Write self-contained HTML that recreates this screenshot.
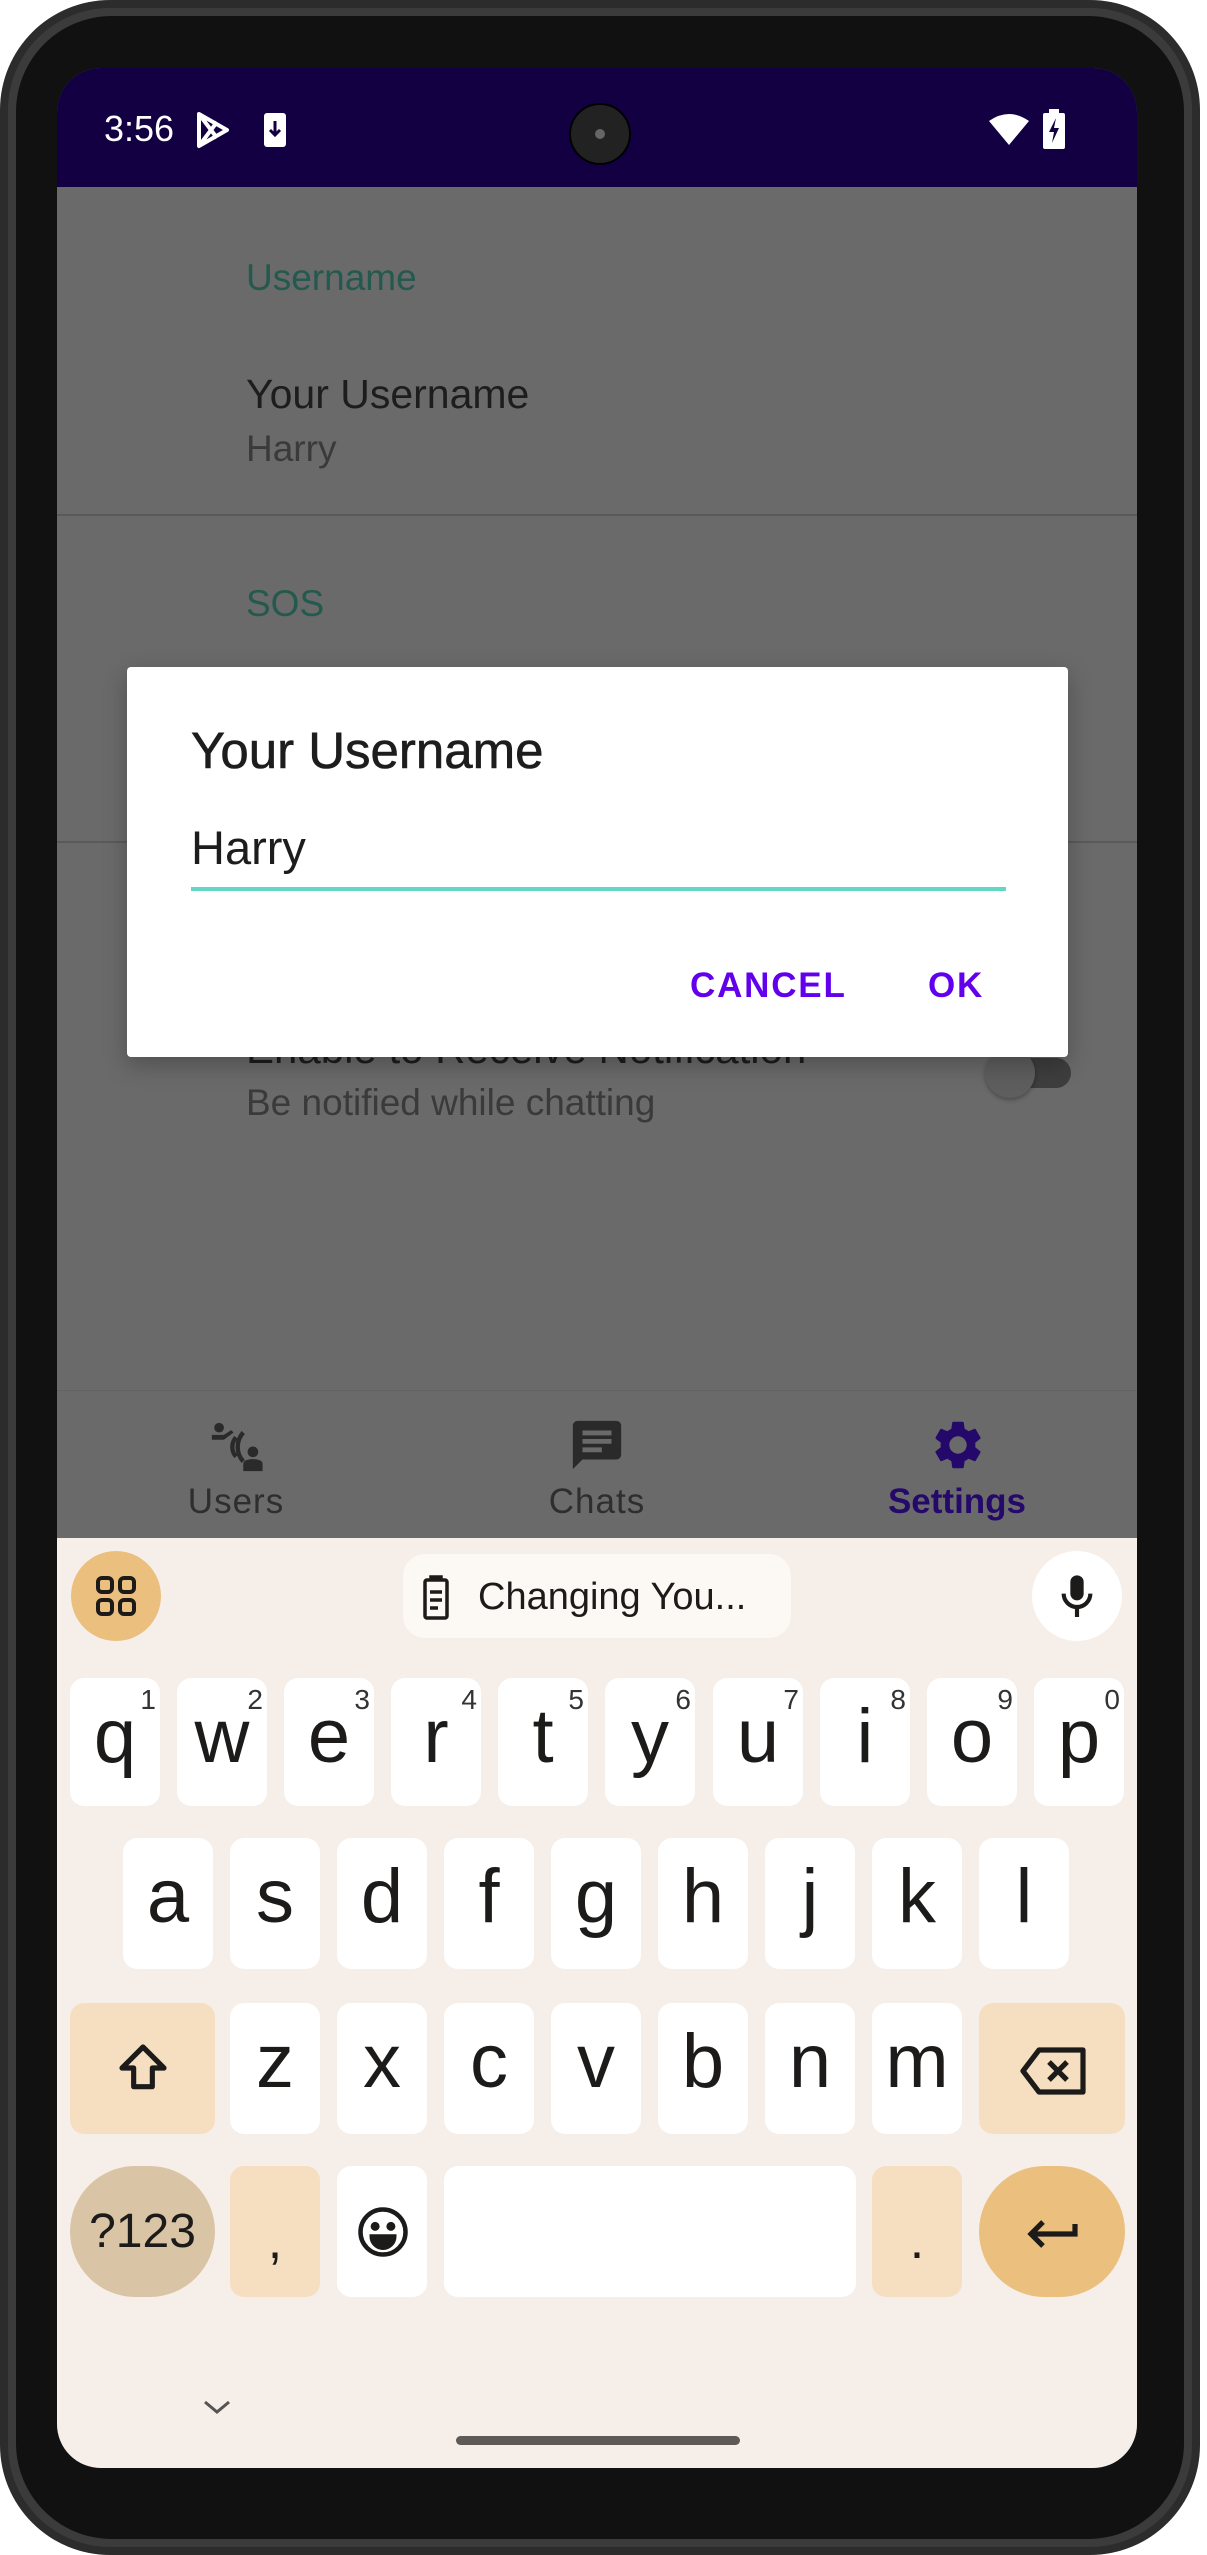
<!DOCTYPE html>
<html><head><meta charset="utf-8"><style>
*{margin:0;padding:0;box-sizing:border-box}
body{width:1207px;height:2555px;background:#fff;position:relative;overflow:hidden;font-family:"Liberation Sans",sans-serif}
.a{position:absolute}
.t{position:absolute;line-height:1;white-space:nowrap}
.k{position:absolute;background:#fff;border-radius:14px;width:90px;height:128px;text-align:center;font-size:76px;line-height:118px;color:#1c1b1a}
.k sup{position:absolute;right:4px;top:8px;font-size:28px;line-height:1;color:#333}
.s{background:#f5dfc0}
</style></head><body>
<div class="a" style="left:0;top:0;width:1200px;height:2555px;border-radius:110px;background:#2c2c2c"></div>
<div class="a" style="left:8px;top:8px;width:1184px;height:2539px;border-radius:102px;background:#3b3b3b"></div>
<div class="a" style="left:16px;top:16px;width:1168px;height:2523px;border-radius:96px;background:#111"></div>
<div class="a" style="left:57px;top:68px;width:1080px;height:2400px;border-radius:44px;overflow:hidden;background:#6a6a6a">
 <div class="a" style="left:0;top:0;width:1080px;height:119px;background:#130042"></div>
 <div class="t" style="left:47px;top:43px;font-size:36px;color:#fff">3:56</div>
 <svg class="a" style="left:138px;top:42px" width="36" height="40" viewBox="0 0 36 40"><path d="M4 4 L32 20 L4 36 Z M4 4 L22 28 M4 36 L22 12" fill="none" stroke="#fff" stroke-width="4" stroke-linejoin="round"/></svg>
 <svg class="a" style="left:205px;top:43px" width="26" height="38" viewBox="0 0 26 38"><rect x="2" y="2" width="22" height="34" rx="3" fill="#fff"/><path d="M13 10v14M8 19l5 5 5-5" stroke="#130042" stroke-width="3" fill="none"/></svg>
 <div class="a" style="left:512px;top:35px;width:62px;height:62px;border-radius:50%;background:#222;border:2px solid #000"></div>
 <div class="a" style="left:538px;top:61px;width:10px;height:10px;border-radius:50%;background:#666"></div>
 <svg class="a" style="left:932px;top:45px" width="40" height="32" viewBox="0 0 40 32"><path d="M0 8 Q20 -6 40 8 L20 32 Z" fill="#fff"/></svg>
 <svg class="a" style="left:986px;top:41px" width="22" height="40" viewBox="0 0 22 40"><rect x="6" y="0" width="10" height="4" fill="#fff"/><rect x="0" y="4" width="22" height="36" rx="2" fill="#fff"/><path d="M13 9 L6 23 H11 L9 34 L16 19 H11 Z" fill="#130042"/></svg>

 <div class="t" style="left:189px;top:191px;font-size:37px;color:#24594e">Username</div>
 <div class="t" style="left:189px;top:306px;font-size:41px;color:#1d1d1d">Your Username</div>
 <div class="t" style="left:189px;top:362px;font-size:37px;color:#3a3a3a">Harry</div>
 <div class="a" style="left:0;top:446px;width:1080px;height:2px;background:#5a5a5a"></div>
 <div class="t" style="left:189px;top:517px;font-size:37px;color:#24594e">SOS</div>
 <div class="a" style="left:0;top:773px;width:1080px;height:2px;background:#5a5a5a"></div>
 <div class="t" style="left:189px;top:960px;font-size:42px;color:#1d1d1d">Enable to Receive Notification</div>
 <div class="t" style="left:189px;top:1016px;font-size:37px;color:#3a3a3a">Be notified while chatting</div>
 <div class="a" style="left:958px;top:990px;width:56px;height:30px;border-radius:15px;background:#3e3e3e"></div>
 <div class="a" style="left:928px;top:980px;width:50px;height:50px;border-radius:50%;background:#5e5e5e;box-shadow:0 2px 4px rgba(0,0,0,.3)"></div>

 <div class="a" style="left:70px;top:599px;width:941px;height:390px;background:#fff;border-radius:4px;box-shadow:0 8px 24px rgba(0,0,0,.25)"></div>
 <div class="t" style="left:134px;top:657px;font-size:51px;color:#1d1d1d;-webkit-text-stroke:0.6px #1d1d1d">Your Username</div>
 <div class="t" style="left:134px;top:756px;font-size:47px;color:#1d1d1d">Harry</div>
 <div class="a" style="left:134px;top:819px;width:815px;height:4px;background:#63d7c6"></div>
 <div class="t" style="left:633px;top:900px;font-size:35px;color:#6200ee;letter-spacing:1.8px;font-weight:bold">CANCEL</div>
 <div class="t" style="left:871px;top:900px;font-size:35px;color:#6200ee;letter-spacing:1.8px;font-weight:bold">OK</div>

 <div class="a" style="left:0;top:1322px;width:1080px;height:1px;background:#626262"></div>
 <svg class="a" style="left:150px;top:1350px" width="58" height="58" viewBox="0 0 24 24"><circle cx="5" cy="4" r="2" fill="#2a2a2a"/><path d="M2 7h5l3-2 1 1-4 3H2z" fill="#2a2a2a"/><path d="M12 8a6 6 0 0 0 0 8M15 6a9 9 0 0 0 0 12" stroke="#2a2a2a" stroke-width="1.8" fill="none"/><circle cx="19" cy="14" r="2.2" fill="#2a2a2a"/><path d="M15 22v-3c0-1.5 2-2 4-2s4 .5 4 2v3z" fill="#2a2a2a"/></svg>
 <svg class="a" style="left:511px;top:1348px" width="58" height="58" viewBox="0 0 24 24"><path d="M4 2h16a2 2 0 0 1 2 2v12a2 2 0 0 1-2 2H6l-4 4V4a2 2 0 0 1 2-2z" fill="#2a2a2a"/><path d="M6 6h12v2H6zM6 9.5h12v2H6zM6 13h8v2H6z" fill="#6a6a6a"/></svg>
 <svg class="a" style="left:872px;top:1348px" width="58" height="58" viewBox="0 0 24 24"><path fill="#24096a" d="M19.14 12.94c.04-.3.06-.61.06-.94 0-.32-.02-.64-.07-.94l2.03-1.58a.49.49 0 0 0 .12-.61l-1.92-3.32a.49.49 0 0 0-.59-.22l-2.39.96c-.5-.38-1.030-.7-1.62-.94l-.36-2.54a.48.48 0 0 0-.48-.41h-3.84c-.24 0-.43.17-.47.41l-.36 2.54c-.59.24-1.13.57-1.62.94l-2.39-.96a.49.49 0 0 0-.59.22L2.74 8.87a.48.48 0 0 0 .12.61l2.030 1.58c-.05.3-.09.63-.09.94s.02.64.07.94l-2.03 1.58a.49.49 0 0 0-.12.61l1.92 3.32c.12.22.37.29.59.22l2.39-.96c.5.38 1.03.7 1.62.94l.36 2.54c.05.24.24.41.48.41h3.84c.24 0 .44-.17.47-.41l.36-2.54c.59-.24 1.13-.56 1.62-.94l2.39.96c.22.08.47 0 .59-.22l1.92-3.32a.48.48 0 0 0-.12-.61zM12 15.6A3.6 3.6 0 1 1 12 8.4a3.6 3.6 0 0 1 0 7.2z"/></svg>
 <div class="t" style="left:119px;top:1416px;width:120px;text-align:center;font-size:35px;color:#2e2e2e;letter-spacing:1px">Users</div>
 <div class="t" style="left:480px;top:1416px;width:120px;text-align:center;font-size:35px;color:#2e2e2e;letter-spacing:1px">Chats</div>
 <div class="t" style="left:820px;top:1416px;width:160px;text-align:center;font-size:35px;color:#24096a;font-weight:bold">Settings</div>

 <div class="a" style="left:0;top:1470px;width:1080px;height:930px;background:#f6eee8"></div>
 <div class="a" style="left:14px;top:1483px;width:90px;height:90px;border-radius:50%;background:#ebc07f"></div>
 <svg class="a" style="left:37px;top:1506px" width="44" height="44" viewBox="0 0 44 44" fill="none" stroke="#1c1b1a" stroke-width="4"><rect x="4" y="4" width="14" height="14" rx="4"/><rect x="26" y="4" width="14" height="14" rx="4"/><rect x="4" y="26" width="14" height="14" rx="4"/><rect x="26" y="26" width="14" height="14" rx="4"/></svg>
 <div class="a" style="left:346px;top:1486px;width:388px;height:84px;border-radius:22px;background:#fcf8f4"></div>
 <svg class="a" style="left:366px;top:1506px" width="26" height="46" viewBox="0 0 26 46" fill="none" stroke="#1c1b1a" stroke-width="3.5"><rect x="2" y="6" width="22" height="38" rx="2"/><path d="M8 6V3h10v3M7 18h12M7 26h12M7 34h8"/></svg>
 <div class="t" style="left:421px;top:1510px;font-size:38px;color:#1c1b1a">Changing You...</div>
 <div class="a" style="left:975px;top:1483px;width:90px;height:90px;border-radius:50%;background:#fff"></div>
 <svg class="a" style="left:1000px;top:1505px" width="40" height="48" viewBox="0 0 24 28"><rect x="8" y="1" width="8" height="15" rx="4" fill="#1c1b1a"/><path d="M4 12a8 8 0 0 0 16 0M12 20v6" stroke="#1c1b1a" stroke-width="2.5" fill="none"/></svg>

 <div class="k" style="left:13px;top:1610px">q<sup>1</sup></div>
 <div class="k" style="left:120px;top:1610px">w<sup>2</sup></div>
 <div class="k" style="left:227px;top:1610px">e<sup>3</sup></div>
 <div class="k" style="left:334px;top:1610px">r<sup>4</sup></div>
 <div class="k" style="left:441px;top:1610px">t<sup>5</sup></div>
 <div class="k" style="left:548px;top:1610px">y<sup>6</sup></div>
 <div class="k" style="left:656px;top:1610px">u<sup>7</sup></div>
 <div class="k" style="left:763px;top:1610px">i<sup>8</sup></div>
 <div class="k" style="left:870px;top:1610px">o<sup>9</sup></div>
 <div class="k" style="left:977px;top:1610px">p<sup>0</sup></div>
 <div class="k" style="left:66px;top:1770px;height:131px">a</div>
 <div class="k" style="left:173px;top:1770px;height:131px">s</div>
 <div class="k" style="left:280px;top:1770px;height:131px">d</div>
 <div class="k" style="left:387px;top:1770px;height:131px">f</div>
 <div class="k" style="left:494px;top:1770px;height:131px">g</div>
 <div class="k" style="left:601px;top:1770px;height:131px">h</div>
 <div class="k" style="left:708px;top:1770px;height:131px">j</div>
 <div class="k" style="left:815px;top:1770px;height:131px">k</div>
 <div class="k" style="left:922px;top:1770px;height:131px">l</div>
 <div class="k s" style="left:13px;top:1935px;width:145px;height:131px"></div>
 <svg class="a" style="left:58px;top:1972px" width="56" height="56" viewBox="0 0 24 24"><path d="M12 3 L21 12 H16 V20 H8 V12 H3 Z" fill="none" stroke="#1c1b1a" stroke-width="2.2" stroke-linejoin="round"/></svg>
 <div class="k" style="left:173px;top:1935px;height:131px">z</div>
 <div class="k" style="left:280px;top:1935px;height:131px">x</div>
 <div class="k" style="left:387px;top:1935px;height:131px">c</div>
 <div class="k" style="left:494px;top:1935px;height:131px">v</div>
 <div class="k" style="left:601px;top:1935px;height:131px">b</div>
 <div class="k" style="left:708px;top:1935px;height:131px">n</div>
 <div class="k" style="left:815px;top:1935px;height:131px">m</div>
 <div class="k s" style="left:922px;top:1935px;width:146px;height:131px"></div>
 <svg class="a" style="left:962px;top:1978px" width="68" height="50" viewBox="0 0 34 25"><path d="M10 2 H32 V23 H10 L2 12.5 Z" fill="none" stroke="#1c1b1a" stroke-width="2.6" stroke-linejoin="round"/><path d="M15 8 L24 17 M24 8 L15 17" stroke="#1c1b1a" stroke-width="2.6"/></svg>
 <div class="k" style="left:13px;top:2098px;width:145px;height:131px;border-radius:66px;background:#d9c5a5;font-size:48px;line-height:131px">?123</div>
 <div class="k s" style="left:173px;top:2098px;height:131px;font-size:52px;line-height:150px">,</div>
 <div class="k" style="left:280px;top:2098px;height:131px"></div>
 <svg class="a" style="left:299px;top:2137px" width="54" height="54" viewBox="0 0 24 24" fill="none" stroke="#1c1b1a" stroke-width="2"><circle cx="12" cy="12" r="10"/><circle cx="8.5" cy="9.5" r="1" fill="#1c1b1a"/><circle cx="15.5" cy="9.5" r="1" fill="#1c1b1a"/><path d="M7 14h10a5 5 0 0 1-10 0z" fill="#1c1b1a"/></svg>
 <div class="k" style="left:387px;top:2098px;width:412px;height:131px"></div>
 <div class="k s" style="left:815px;top:2098px;height:131px;font-size:52px;line-height:150px">.</div>
 <div class="k" style="left:922px;top:2098px;width:146px;height:131px;border-radius:66px;background:#ebc07f"></div>
 <svg class="a" style="left:968px;top:2140px" width="54" height="46" viewBox="0 0 27 23"><path d="M25 8 V13 H3 M9 7 L3 13 L9 19" fill="none" stroke="#1c1b1a" stroke-width="2.6"/></svg>
 <svg class="a" style="left:144px;top:2328px" width="32" height="22" viewBox="0 0 32 22"><path d="M4 6 L16 16 L28 6" fill="none" stroke="#555" stroke-width="3"/></svg>
 <div class="a" style="left:399px;top:2368px;width:284px;height:9px;border-radius:5px;background:#5e5a57"></div>
</div>
</body></html>
